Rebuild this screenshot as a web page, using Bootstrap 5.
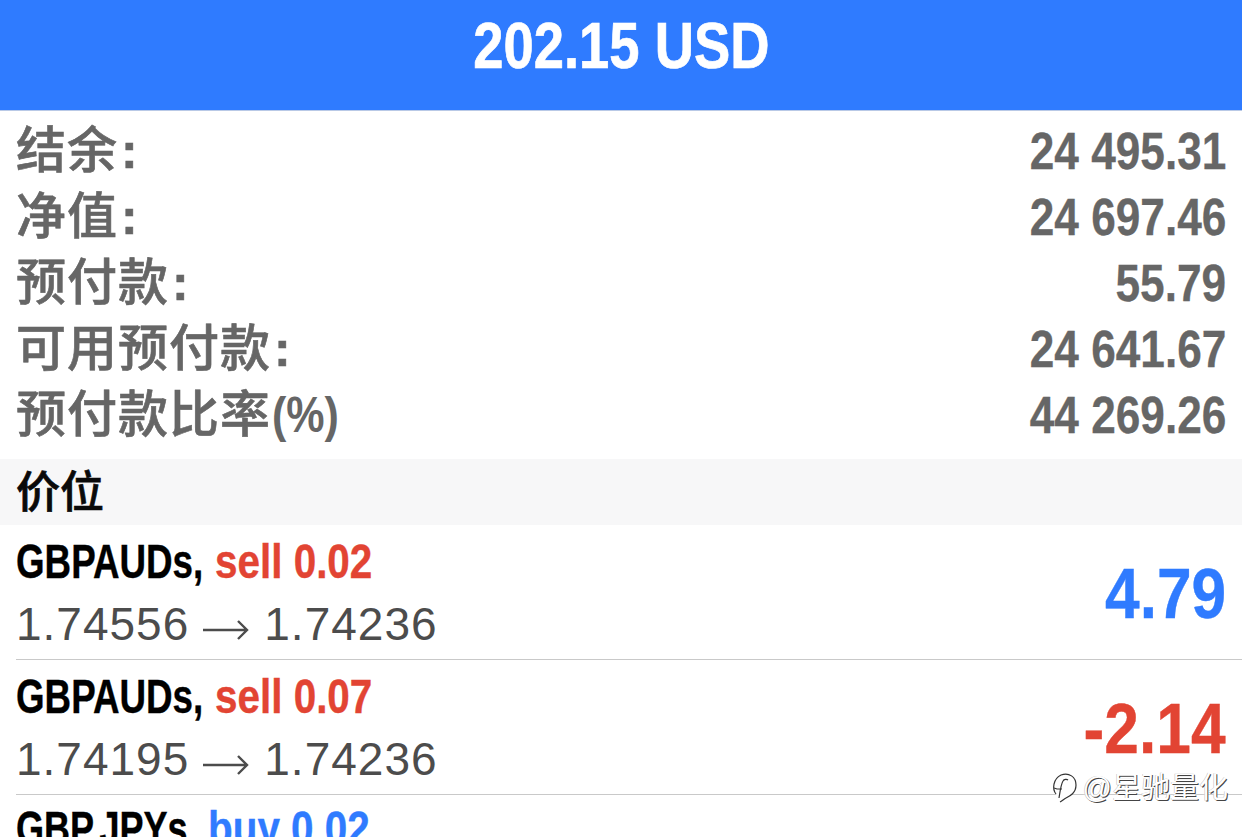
<!DOCTYPE html>
<html lang="zh">
<head>
<meta charset="utf-8">
<title>Trade</title>
<link href="https://cdn.jsdelivr.net/npm/bootstrap@5.3.0/dist/css/bootstrap.min.css" rel="stylesheet">
<style>
html,body{height:837px;overflow:hidden;background:#fff;}
body{font-family:"Liberation Sans","Noto Sans CJK SC",sans-serif;}
.screen{width:1242px;height:837px;overflow:hidden;position:relative;}
.hero{height:111px;background:#2f7bff;border-bottom:1px solid #b9c9e6;color:#fff;font-weight:700;font-size:64px;line-height:92px;-webkit-text-stroke:.7px #fff;}
.sq{display:inline-block;white-space:nowrap;}
.sq-l{transform-origin:left center;}
.sq-r{transform:scaleX(.85);transform-origin:right center;}
.sq-c{transform:scaleX(.85);transform-origin:center center;}
.summary{padding:7px 16px 11px 16px;}
.sumrow{height:66px;color:#666;font-weight:700;font-size:52px;line-height:66px;-webkit-text-stroke:.3px #666;}
.sumrow .cjk{font-size:50px;font-weight:500;letter-spacing:1px;-webkit-text-stroke:.6px #666;}
.dots{font-weight:700;font-size:50px;margin-left:3px;}
.pct{font-weight:700;font-size:50px;letter-spacing:0;-webkit-text-stroke:0;transform:scaleX(.86);margin-left:1px;}
.band{height:66px;background:#f7f7f8;color:#0a0a0a;padding-left:16px;font-size:44px;font-weight:500;line-height:68px;-webkit-text-stroke:.7px #0a0a0a;}
.trade{height:135px;margin-left:16px;border-bottom:1px solid #c9c9c9;padding-right:16px;}
.sym{font-size:49px;font-weight:700;color:#000;line-height:60px;padding-top:3px;white-space:nowrap;-webkit-text-stroke:.4px currentColor;}
.tick{width:199px;transform:scaleX(.75);}
.tick-j{width:192px;transform:scaleX(.735);}
.side{transform:scaleX(.825);}
.sell{color:#e24433;}
.buy{color:#2f7bff;}
.px{font-size:46px;color:#4c4c4c;line-height:66px;letter-spacing:1px;}
.arrowm{width:46px;height:24px;margin:0 15px 0 14px;vertical-align:-2px;}
.pl{font-size:70px;font-weight:700;padding-top:4px;-webkit-text-stroke:.4px currentColor;}
.pl .sq-r{transform:scaleX(.89);}
.mark-w{position:absolute;right:14px;top:769px;gap:5px;color:#fff;font-size:29px;line-height:38px;text-shadow:1px 1px 0 #444,-.5px -.5px 0 #bbb,0 0 3px #fff;}
</style>
</head>
<body>
<div class="screen">
  <div class="hero text-center"><span class="sq sq-c">202.15 USD</span></div>
  <div class="summary">
    <div class="sumrow d-flex justify-content-between"><span class="cjk">结余<span class="dots">:</span></span><span class="sq sq-r">24 495.31</span></div>
    <div class="sumrow d-flex justify-content-between"><span class="cjk">净值<span class="dots">:</span></span><span class="sq sq-r">24 697.46</span></div>
    <div class="sumrow d-flex justify-content-between"><span class="cjk">预付款<span class="dots">:</span></span><span class="sq sq-r">55.79</span></div>
    <div class="sumrow d-flex justify-content-between"><span class="cjk">可用预付款<span class="dots">:</span></span><span class="sq sq-r">24 641.67</span></div>
    <div class="sumrow d-flex justify-content-between"><span class="cjk">预付款比率<span class="sq sq-l pct">(%)</span></span><span class="sq sq-r">44 269.26</span></div>
  </div>
  <div class="band">价位</div>
  <div class="trade d-flex justify-content-between align-items-center">
    <div><div class="sym"><span class="sq sq-l tick">GBPAUDs,</span><span class="sq sq-l side sell">sell 0.02</span></div>
    <div class="px">1.74556<svg class="arrowm" viewBox="0 0 46 24" fill="none" stroke="#4c4c4c" stroke-width="2.4"><path d="M0 12H44M35 3l9 9-9 9"/></svg>1.74236</div></div>
    <div class="pl buy"><span class="sq sq-r">4.79</span></div>
  </div>
  <div class="trade d-flex justify-content-between align-items-center">
    <div><div class="sym"><span class="sq sq-l tick">GBPAUDs,</span><span class="sq sq-l side sell">sell 0.07</span></div>
    <div class="px">1.74195<svg class="arrowm" viewBox="0 0 46 24" fill="none" stroke="#4c4c4c" stroke-width="2.4"><path d="M0 12H44M35 3l9 9-9 9"/></svg>1.74236</div></div>
    <div class="pl sell"><span class="sq sq-r">-2.14</span></div>
  </div>
  <div class="trade">
    <div class="sym"><span class="sq sq-l tick-j">GBP.JPYs,</span><span class="sq sq-l side buy">buy 0.02</span></div>
  </div>
  <div class="mark-w d-flex align-items-center">
    <svg width="28" height="34" viewBox="0 0 28 34" fill="#fff" stroke="#333" stroke-width="1.2"><path d="M6 23C2 18 3 8 11 4c8-3 15 2 15 10 0 8-6 11-10 13-2 1-4 3-6 4"/><path fill="none" d="M9 27c1-6 2-14 4-17 1-2 4-2 5-1M4 17l3 1h5"/></svg>
    <span>@星驰量化</span>
  </div>
</div>
</body>
</html>
